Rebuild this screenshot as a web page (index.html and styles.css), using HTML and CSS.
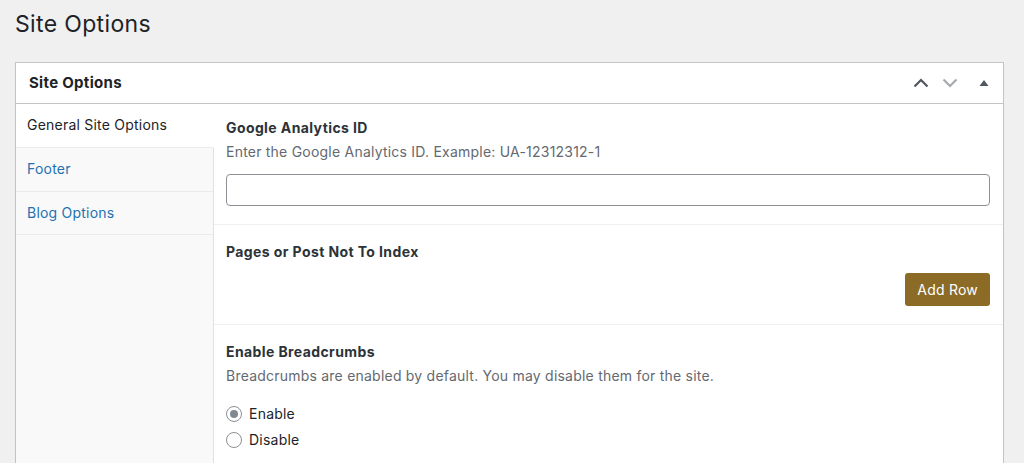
FILE: index.html
```html
<!DOCTYPE html>
<html>
<head>
<meta charset="utf-8">
<link rel="stylesheet" href="styles.css">
</head>
<body>
<div class="wrap">
  <h1 class="page-title">Site Options</h1>
  <div class="postbox">
    <div class="postbox-header">
      <h2 class="postbox-title">Site Options</h2>
      <div class="handle-actions">
        <svg class="hicon up" width="16" height="10" viewBox="0 0 16 10"><path d="M1.5 8.5 L8 2 L14.5 8.5" fill="none" stroke="currentColor" stroke-width="2.2"/></svg>
        <svg class="hicon down" width="16" height="10" viewBox="0 0 16 10"><path d="M1.5 1.5 L8 8 L14.5 1.5" fill="none" stroke="currentColor" stroke-width="2.2"/></svg>
        <svg class="hicon tri" width="10" height="8" viewBox="0 0 10 8"><path d="M0.5 7 L5 1 L9.5 7 Z" fill="currentColor"/></svg>
      </div>
    </div>
    <div class="postbox-body">
      <ul class="tabs">
        <li class="tab active">General Site Options</li>
        <li class="tab"><a href="#">Footer</a></li>
        <li class="tab"><a href="#">Blog Options</a></li>
      </ul>
      <div class="fields">
        <div class="field first">
          <div class="label">Google Analytics ID</div>
          <p class="desc">Enter the Google Analytics ID. Example: UA-12312312-1</p>
          <input class="text-input" type="text">
        </div>
        <div class="field">
          <div class="label">Pages or Post Not To Index</div>
          <div class="actions"><button class="btn">Add Row</button></div>
        </div>
        <div class="field last">
          <div class="label">Enable Breadcrumbs</div>
          <p class="desc">Breadcrumbs are enabled by default. You may disable them for the site.</p>
          <ul class="radios">
            <li><span class="radio checked"></span>Enable</li>
            <li><span class="radio"></span>Disable</li>
          </ul>
        </div>
      </div>
    </div>
  </div>
</div>
</body>
</html>
```
FILE: styles.css
```css
* { box-sizing: border-box; }
html, body { margin: 0; padding: 0; }
body {
  background: #f0f0f1;
  font-family: Inter, "Liberation Sans", Arial, sans-serif;
  font-size: 14px;
  letter-spacing: 0.22px;
  color: #1d2327;
  overflow: hidden;
  height: 463px;
}
.wrap { padding: 0 20px 0 15px; }
.page-title {
  margin: 0;
  padding: 9px 0 0 0;
  font-size: 23px;
  font-weight: 400;
  line-height: 30px;
  height: 62px;
  letter-spacing: 0.35px;
}
.postbox {
  background: #fff;
  border: 1px solid #c3c4c7;
  box-shadow: 0 1px 1px rgba(0,0,0,0.04);
}
.postbox-header {
  height: 41px;
  border-bottom: 1px solid #c3c4c7;
  display: flex;
  align-items: center;
  justify-content: space-between;
  padding: 0 14px 0 13px;
}
.postbox-title {
  margin: 0;
  font-size: 15px;
  font-weight: 700;
  line-height: 20px;
  letter-spacing: 0.3px;
}
.handle-actions { display: flex; align-items: center; }
.hicon { display: block; }
.hicon.up { color: #50575e; margin-right: 13px; }
.hicon.down { color: #a7aaad; margin-right: 21px; }
.hicon.tri { color: #50575e; }
.postbox-body { display: flex; }
.tabs {
  list-style: none;
  margin: 0;
  padding: 0;
  width: 198px;
  flex: none;
  background: #f9f9f9;
  border-right: 1px solid #e1e1e1;
}
.tab {
  height: 43.5px;
  line-height: 42px;
  padding: 0 11px;
  border-bottom: 1px solid #ececec;
  font-size: 14px;
}
.tab.active {
  background: #fff;
  color: #1d2327;
  margin-right: -1px;
  height: 44px;
}
.tab a { color: #2271b1; text-decoration: none; }
.fields { flex: 1; }
.field {
  padding: 17px 13px 18px 12px;
  border-bottom: 1px solid #f0f0f0;
}
.field.first { padding-top: 14px; }
.field.last { border-bottom: none; padding-bottom: 20px; }
.label {
  font-weight: 700;
  line-height: 20px;
  color: #2c3338;
  letter-spacing: 0.4px;
}
.desc {
  margin: 4px 0 0 0;
  line-height: 20px;
  color: #646970;
}
.text-input {
  display: block;
  width: 100%;
  height: 32px;
  margin-top: 12px;
  border: 1px solid #8c8f94;
  border-radius: 4px;
  background: #fff;
  font: inherit;
}
.actions { display: flex; justify-content: flex-end; margin-top: 11px; }
.btn {
  background: #8c6b26;
  color: #fff;
  border: none;
  border-radius: 3px;
  height: 33px;
  padding: 0 12px;
  font-family: inherit;
  font-size: 14px;
  letter-spacing: 0.22px;
}
.radios { list-style: none; margin: 15px 0 0 0; padding: 0; }
.radios li { display: flex; align-items: center; height: 26px; line-height: 20px; }
.radio {
  width: 16px;
  height: 16px;
  border: 1px solid #8c8f94;
  border-radius: 50%;
  margin-right: 7px;
  display: inline-flex;
  align-items: center;
  justify-content: center;
  background: #fff;
}
.radio.checked::after {
  content: "";
  width: 8px;
  height: 8px;
  border-radius: 50%;
  background: #7e8993;
}
```
